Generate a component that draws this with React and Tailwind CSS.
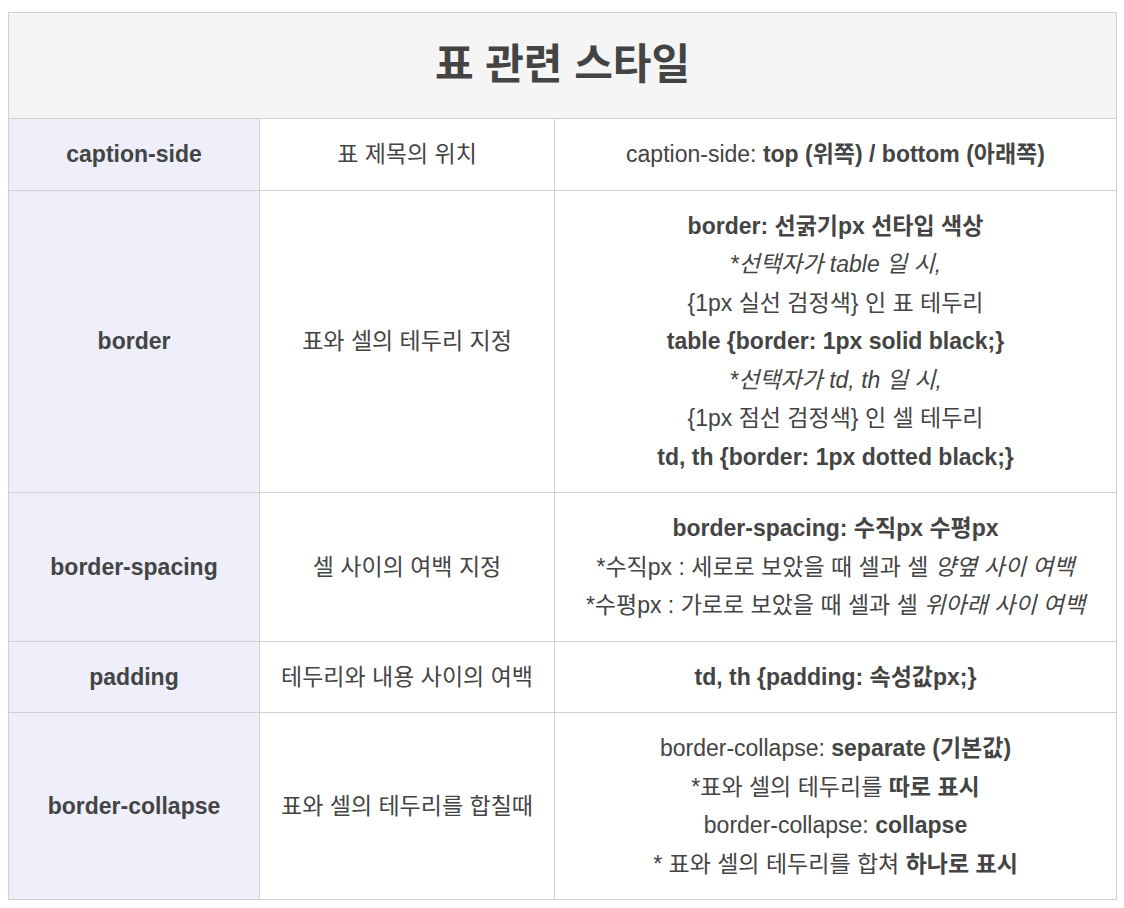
const rows = [
  {
    name: "caption-side",
    desc: "표 제목의 위치",
    lines: [
      <>
        caption-side: <b>top (위쪽) / bottom (아래쪽)</b>
      </>,
    ],
  },
  {
    name: "border",
    desc: "표와 셀의 테두리 지정",
    lines: [
      <b>border: 선굵기px 선타입 색상</b>,
      <i>*선택자가 table 일 시,</i>,
      <>{"{1px 실선 검정색} 인 표 테두리"}</>,
      <b>{"table {border: 1px solid black;}"}</b>,
      <i>*선택자가 td, th 일 시,</i>,
      <>{"{1px 점선 검정색} 인 셀 테두리"}</>,
      <b>{"td, th {border: 1px dotted black;}"}</b>,
    ],
  },
  {
    name: "border-spacing",
    desc: "셀 사이의 여백 지정",
    lines: [
      <b>border-spacing: 수직px 수평px</b>,
      <>
        *수직px : 세로로 보았을 때 셀과 셀 <i>양옆 사이 여백</i>
      </>,
      <>
        *수평px : 가로로 보았을 때 셀과 셀 <i>위아래 사이 여백</i>
      </>,
    ],
  },
  {
    name: "padding",
    desc: "테두리와 내용 사이의 여백",
    lines: [<b>{"td, th {padding: 속성값px;}"}</b>],
  },
  {
    name: "border-collapse",
    desc: "표와 셀의 테두리를 합칠때",
    lines: [
      <>
        border-collapse: <b>separate (기본값)</b>
      </>,
      <>
        *표와 셀의 테두리를 <b>따로 표시</b>
      </>,
      <>
        border-collapse: <b>collapse</b>
      </>,
      <>
        * 표와 셀의 테두리를 합쳐 <b>하나로 표시</b>
      </>,
    ],
  },
];

export default function App() {
  return (
    <div className="min-h-screen bg-white px-[8px] pt-[12px] font-['Liberation_Sans','Noto_Sans_CJK_KR',sans-serif] text-[#444]">
      <table className="w-[1108px] table-fixed border-collapse border border-[#c9c9c9] text-center text-[23px] leading-[38.5px]">
        <colgroup>
          <col className="w-[251px]" />
          <col className="w-[295px]" />
          <col className="w-[562px]" />
        </colgroup>
        <thead>
          <tr className="h-[106px] bg-[#f5f5f5]">
            <th colSpan={3} className="border border-[#d0d0d0] text-[42px] font-bold">
              표 관련 스타일
            </th>
          </tr>
        </thead>
        <tbody>
          {rows.map((row) => (
            <tr key={row.name}>
              <th className="border border-[#d0d0d0] bg-[#eeeffb] font-bold">{row.name}</th>
              <td className="border border-[#d0d0d0]">{row.desc}</td>
              <td className="border border-[#d0d0d0] py-[16px]">
                {row.lines.map((line, i) => (
                  <div key={i}>{line}</div>
                ))}
              </td>
            </tr>
          ))}
        </tbody>
      </table>
    </div>
  );
}
